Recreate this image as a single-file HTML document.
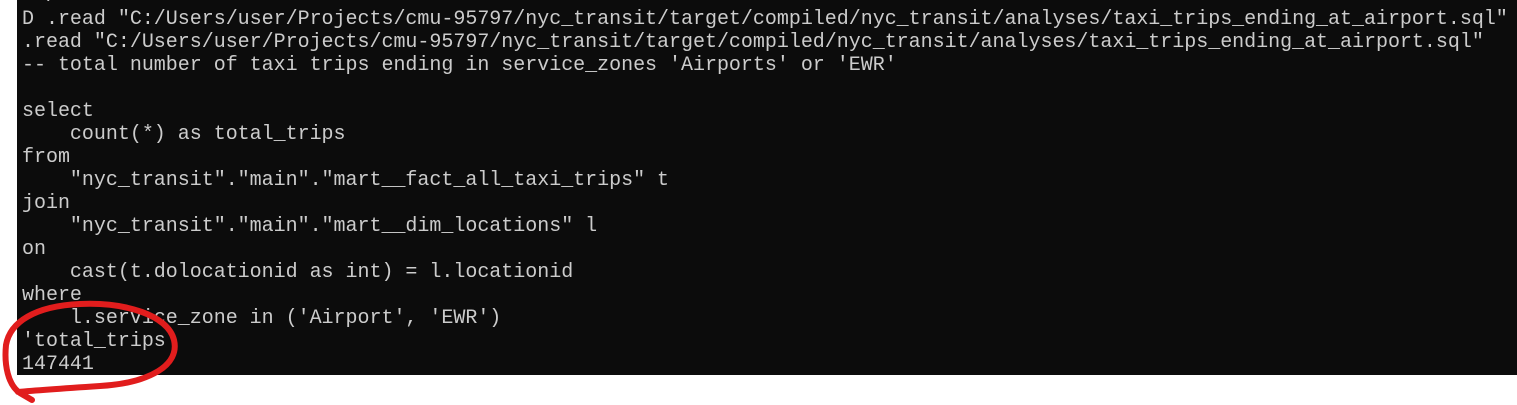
<!DOCTYPE html>
<html><head><meta charset="utf-8"><style>
html,body{margin:0;padding:0;background:#fff;width:1517px;height:405px;overflow:hidden;position:relative}
#t{position:absolute;left:17px;top:0;width:1500px;height:375px;background:#0c0c0c;overflow:hidden}
pre{margin:0;position:absolute;left:5px;top:-15px;font-family:"Liberation Mono",monospace;font-size:20px;line-height:23px;color:#cccccc;letter-spacing:-0.02px}
svg{position:absolute;left:0;top:0}
</style></head><body>
<div id="t"><pre>  /
D .read "C:/Users/user/Projects/cmu-95797/nyc_transit/target/compiled/nyc_transit/analyses/taxi_trips_ending_at_airport.sql"
.read "C:/Users/user/Projects/cmu-95797/nyc_transit/target/compiled/nyc_transit/analyses/taxi_trips_ending_at_airport.sql"
-- total number of taxi trips ending in service_zones 'Airports' or 'EWR'

select
    count(*) as total_trips
from
    "nyc_transit"."main"."mart__fact_all_taxi_trips" t
join
    "nyc_transit"."main"."mart__dim_locations" l
on
    cast(t.dolocationid as int) = l.locationid
where
    l.service_zone in ('Airport', 'EWR')
'total_trips
147441</pre></div>
<svg width="1517" height="405"><path d="M32 400 L20 393 C8 385 4 365 6 345 C10 322 35 306 80 304 C125 302 168 315 174 340 C180 365 150 383 100 386 C70 388 40 390 18 392" fill="none" stroke="#e11d1d" stroke-width="6" stroke-linecap="round" stroke-linejoin="round"/></svg>
</body></html>
